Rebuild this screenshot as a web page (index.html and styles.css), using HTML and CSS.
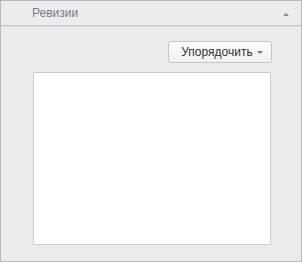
FILE: index.html
```html
<!DOCTYPE html>
<html lang="ru">
<head>
    <meta charset="UTF-8">
    <title>Ревизии</title>
    <link rel="stylesheet" href="styles.css">
</head>
<body>
    <div class="panel">
        <div class="panel-header">
            <span class="panel-title">Ревизии</span>
            <span class="collapse-arrow"></span>
        </div>
        <div class="panel-body">
            <button class="sort-button">Упорядочить <span class="drop-arrow"></span></button>
            <div class="revision-list"></div>
        </div>
    </div>
</body>
</html>
```
FILE: styles.css
```css
body {
  margin: 0;
  font-family: "Liberation Sans", Arial, sans-serif;
}
.panel {
  width: 302px;
  height: 262px;
  box-sizing: border-box;
  border: 1px solid #b9b9bb;
  background-color: #ebebed;
  display: flex;
  flex-direction: column;
}
.panel-header {
  height: 24px;
  border-bottom: 1px solid #c6c6c8;
  box-shadow: 0 1px 0 #dedee0;
  background-color: #ececee;
  display: flex;
  align-items: center;
  padding: 0 12px 0 31px;
}
.panel-title {
  flex: 1;
  font-size: 12px;
  color: #7b7b8b;
}
.collapse-arrow {
  width: 0;
  height: 0;
  border-left: 3px solid transparent;
  border-right: 3px solid transparent;
  border-bottom: 3px solid #8a8a8a;
  margin-top: 2px;
}
.panel-body {
  display: flex;
  flex-direction: column;
  padding: 15px 30px 0 32px;
}
.sort-button {
  align-self: flex-end;
  margin-right: -1px;
  height: 22px;
  width: 104px;
  border: 1px solid #c6c6c8;
  border-radius: 3px;
  background: linear-gradient(#fdfdfd, #efeff1);
  font-family: "Liberation Sans", Arial, sans-serif;
  font-size: 12px;
  color: #333;
  padding: 0 0 0 4px;
  display: flex;
  align-items: center;
  justify-content: center;
  gap: 4px;
}
.drop-arrow {
  width: 0;
  height: 0;
  border-left: 3px solid transparent;
  border-right: 3px solid transparent;
  border-top: 3px solid #777;
}
.revision-list {
  margin-top: 9px;
  height: 171px;
  background-color: #fff;
  border: 1px solid #cdcdcf;
}
```
